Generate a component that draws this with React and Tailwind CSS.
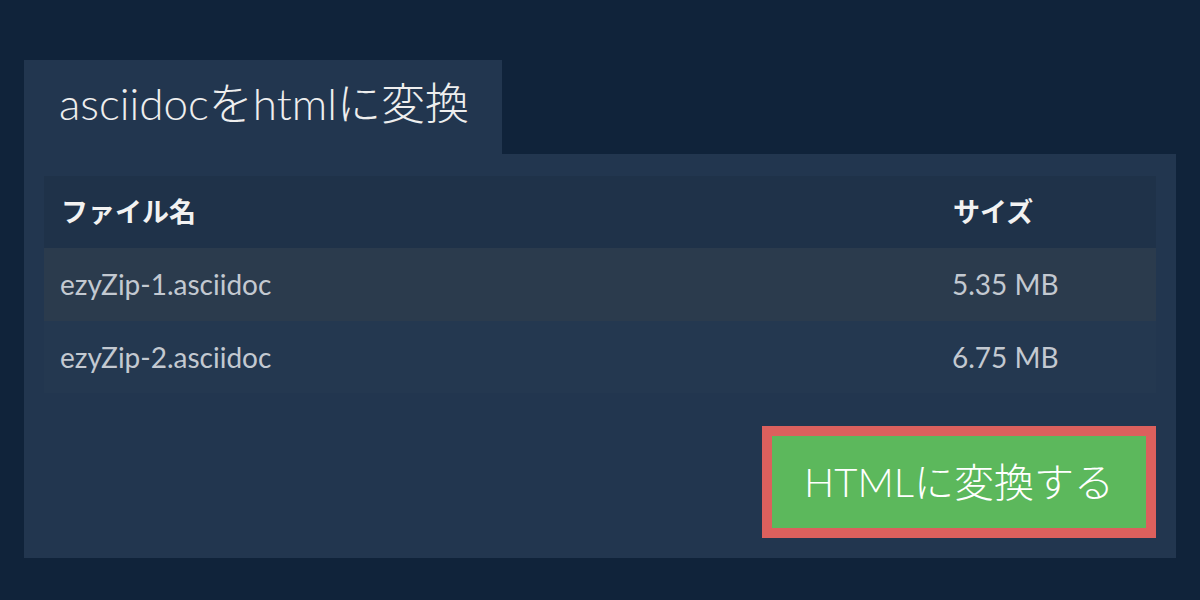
const files = [
  { name: "ezyZip-1.asciidoc", size: "5.35 MB", bg: "bg-[#2b3b4d]" },
  { name: "ezyZip-2.asciidoc", size: "6.75 MB", bg: "bg-[#243850]" },
];

const App = () => {
  return (
    <div
      className="h-[600px] w-[1200px] bg-[#10233a] px-6 pt-[60px]"
      style={{ fontFamily: 'Lato, "Noto Sans CJK JP", sans-serif' }}
    >
      <div className="w-[478px] h-[94px] bg-[#22364f] pl-[35px] pt-[12px]">
        <h1 className="text-[44px] leading-[62px] font-light text-[#eeeeee]">
          asciidocをhtmlに変換
        </h1>
      </div>
      <div className="h-[404px] bg-[#22364f] px-5 pt-[22px]">
        <div className="w-full">
          <div className="flex h-[72px] items-center bg-[#1f3249] text-[27px] font-bold text-[#f2f2f2]">
            <div className="flex-1 pl-[17px]">ファイル名</div>
            <div className="w-[204px] pl-[1px]">サイズ</div>
          </div>
          {files.map((f) => (
            <div
              key={f.name}
              className={`flex h-[72.5px] items-center text-[28px] text-[#c3c9d1] ${f.bg}`}
            >
              <div className="flex-1 pl-4">{f.name}</div>
              <div className="w-[204px]">{f.size}</div>
            </div>
          ))}
        </div>
        <div className="flex justify-end pt-[33px]">
          <button className="h-[112px] w-[394px] border-[10px] border-[#dc605d] bg-[#5cb85c] text-[40px] font-light text-white">
            HTMLに変換する
          </button>
        </div>
      </div>
    </div>
  );
};

export default App;
